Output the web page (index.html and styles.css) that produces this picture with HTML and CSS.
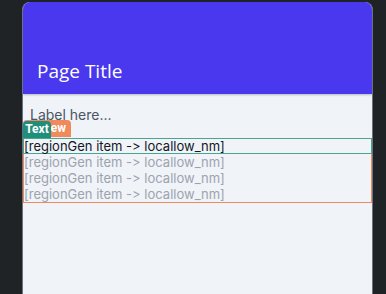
FILE: index.html
```html
<!DOCTYPE html>
<html>
<head>
<meta charset="utf-8">
<link rel="stylesheet" href="styles.css">
</head>
<body>
<div class="card">
  <header class="header">
    <h1 class="title">Page Title</h1>
  </header>
  <main class="content">
    <div class="label">Label here...</div>
    <div class="list">
      <span class="badge badge-view">View</span>
      <div class="item item-first">
        <span class="badge badge-text">Text</span>
        [regionGen item -&gt; locallow_nm]
      </div>
      <div class="item item-muted">[regionGen item -&gt; locallow_nm]</div>
      <div class="item item-muted">[regionGen item -&gt; locallow_nm]</div>
      <div class="item item-muted">[regionGen item -&gt; locallow_nm]</div>
    </div>
  </main>
</div>
</body>
</html>
```
FILE: styles.css
```css
html, body {
  margin: 0;
  padding: 0;
  background: #1f2326;
  height: 100%;
  overflow: hidden;
}
.card {
  margin: 2px 0 0 22px;
  width: 351px;
  height: 292px;
  box-sizing: border-box;
  border-left: 1px solid #6b7280;
  border-right: 1px solid #6b7280;
  border-radius: 8px 8px 0 0;
  background: #f0f3f8;
  overflow: hidden;
  font-family: Inter, "Noto Sans", sans-serif;
  font-feature-settings: "calt" 0, "liga" 0;
}
.header {
  height: 92px;
  background: #4a38ee;
  display: flex;
  align-items: flex-end;
  padding: 0 0 11px 14px;
  box-sizing: border-box;
  box-shadow: 0 1px 2px rgba(0,0,0,0.25);
  position: relative;
}
.title {
  margin: 0;
  color: #ffffff;
  font-family: "Open Sans", sans-serif;
  font-weight: 500;
  font-size: 19px;
  line-height: 24px;
}
.content {
  padding-top: 12px;
}
.label {
  padding-left: 7px;
  color: #4b5563;
  font-size: 14px;
  line-height: 17px;
}
.list {
  position: relative;
  margin-top: 15px;
  border: 1px solid #f08a5d;
  border-top: none;
}
.item {
  font-size: 13px;
  line-height: 16px;
  white-space: nowrap;
  font-weight: 400;
}
.item-first {
  position: relative;
  color: #111827;
  border: 1px solid #4aa58f;
  margin: 0 -1px 0 -1px;
  height: 16px;
  line-height: 15px;
  box-sizing: border-box;
}
.item-muted {
  color: #9ca3af;
}
.badge {
  position: absolute;
  height: 17px;
  line-height: 17px;
  font-size: 12px;
  font-weight: 700;
  color: #ffffff;
  border-radius: 4px 4px 0 0;
  font-family: Roboto, sans-serif;
  box-sizing: border-box;
}
.badge-view {
  top: -18px;
  left: -1px;
  width: 48px;
  text-align: right;
  padding-right: 5px;
  background: #ef8a5c;
}
.badge-text {
  top: -18px;
  left: -1px;
  width: 28px;
  text-align: center;
  background: #1f8f7b;
}
```
